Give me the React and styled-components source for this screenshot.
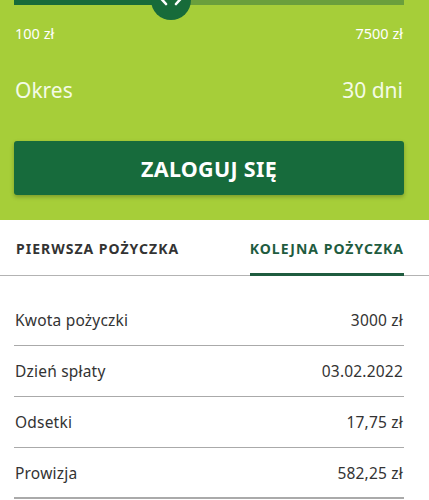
import React from "react";
import styled, { createGlobalStyle } from "styled-components";

const Global = createGlobalStyle`
  html, body { margin: 0; padding: 0; background: #fff; }
  body { font-family: "Noto Sans", "Open Sans", sans-serif; overflow: hidden; }
  * { box-sizing: border-box; }
`;

const Page = styled.div`
  width: 429px;
  height: 500px;
  overflow: hidden;
  background: #fff;
`;

const Hero = styled.section`
  background: #a6ce39;
  padding: 0 25px 25px 14px;
`;

const SliderWrap = styled.div`
  position: relative;
  margin-top: -3px;
`;

const Track = styled.div`
  height: 8px;
  display: flex;
  background: #6a9f3c;
`;

const Fill = styled.div`
  background: #176b3a;
  height: 100%;
`;

const Thumb = styled.div`
  position: absolute;
  top: 3px;
  width: 40px;
  height: 40px;
  border-radius: 50%;
  background: #176b3a;
  transform: translate(-50%, -50%);
  svg { display: block; overflow: visible; }
`;

const Ends = styled.div`
  display: flex;
  justify-content: space-between;
  margin-top: 19px;
  font-size: 14.5px;
  line-height: 18px;
  color: #fff;
  padding: 0 1px;
`;

const PeriodRow = styled.div`
  display: flex;
  justify-content: space-between;
  margin-top: 34px;
  font-size: 21px;
  line-height: 28px;
  color: #f4fbe6;
  padding: 0 1px;
`;

const LoginButton = styled.button`
  display: block;
  width: 100%;
  height: 54px;
  margin-top: 37px;
  border: none;
  border-radius: 3px;
  background: #176b3c;
  color: #fff;
  font-family: inherit;
  font-size: 21.5px;
  font-weight: 700;
  letter-spacing: 0.3px;
  box-shadow: 0 2px 4px rgba(0, 0, 0, 0.25);
  cursor: pointer;
`;

const Tabs = styled.nav`
  display: flex;
  justify-content: space-between;
  height: 56px;
  border-bottom: 1px solid #b3b3b3;
  padding: 0 25px 0 16px;
`;

const Tab = styled.div`
  display: flex;
  align-items: center;
  font-size: 14px;
  font-weight: 700;
  letter-spacing: 1px;
  color: ${(p) => (p.$active ? "#1f5c3f" : "#333")};
  border-bottom: 3px solid ${(p) => (p.$active ? "#1f5c3f" : "transparent")};
  margin-bottom: -1px;
  padding-top: 3px;
`;

const List = styled.div`
  padding: 19px 25px 0 14px;
`;

const Row = styled.div`
  display: flex;
  justify-content: space-between;
  align-items: center;
  height: 51px;
  border-bottom: ${(p) => (p.$last ? "2px" : "1px")} solid #aaa;
  font-size: 15.5px;
  color: #333;
  padding: 0 1px;
  letter-spacing: 0.2px;
`;

const rows = [
  ["Kwota pożyczki", "3000 zł"],
  ["Dzień spłaty", "03.02.2022"],
  ["Odsetki", "17,75 zł"],
  ["Prowizja", "582,25 zł"],
];

export default function App() {
  return (
    <Page>
      <Global />
      <Hero>
        <SliderWrap>
          <Track>
            <Fill style={{ width: "37.5%" }} />
          </Track>
          <Thumb style={{ left: "40.3%" }}>
            <svg width="40" height="40" viewBox="0 0 40 40">
              <path d="M15 13 L10 18.5 L15 24" stroke="#fff" strokeWidth="2.6" strokeLinecap="round" strokeLinejoin="round" fill="none" />
              <path d="M25 13 L30 18.5 L25 24" stroke="#fff" strokeWidth="2.6" strokeLinecap="round" strokeLinejoin="round" fill="none" />
            </svg>
          </Thumb>
        </SliderWrap>
        <Ends>
          <span>100 zł</span>
          <span>7500 zł</span>
        </Ends>
        <PeriodRow>
          <span>Okres</span>
          <span>30 dni</span>
        </PeriodRow>
        <LoginButton>ZALOGUJ SIĘ</LoginButton>
      </Hero>
      <Tabs>
        <Tab>PIERWSZA POŻYCZKA</Tab>
        <Tab $active>KOLEJNA POŻYCZKA</Tab>
      </Tabs>
      <List>
        {rows.map(([k, v], i) => (
          <Row key={k} $last={i === rows.length - 1}>
            <span>{k}</span>
            <span>{v}</span>
          </Row>
        ))}
      </List>
    </Page>
  );
}
